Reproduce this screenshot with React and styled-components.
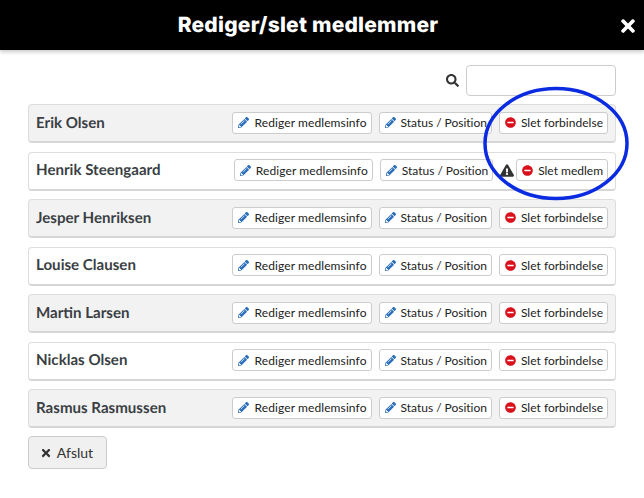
import React from "react";
import styled, { createGlobalStyle } from "styled-components";
import {
  FaPencilAlt,
  FaTimes,
  FaSearch,
  FaMinusCircle,
  FaExclamationTriangle
} from "react-icons/fa";

const GlobalStyle = createGlobalStyle`
  html, body {
    margin: 0;
    background: #fff;
    font-family: Lato, "Liberation Sans", sans-serif;
    text-rendering: geometricPrecision;
  }
`;

const Page = styled.div`
  position: relative;
  width: 644px;
  height: 498px;
  overflow: hidden;
`;

const Header = styled.header`
  height: 50px;
  padding-right: 28px;
  box-sizing: border-box;
  background: #000;
  box-shadow: 0 2px 4px rgba(0, 0, 0, 0.22);
  display: flex;
  align-items: center;
  justify-content: center;
  color: #fff;
  position: relative;
`;

const Title = styled.h1`
  margin: 0;
  font-family: Inter, "Open Sans", sans-serif;
  font-size: 21px;
  font-weight: 800;
  letter-spacing: 0.22px;
`;

const Close = styled(FaTimes)`
  position: absolute;
  top: 16px;
  right: 6px;
  width: 20px;
  height: 20px;
`;

const Content = styled.div`
  padding: 15px 28px 0;
`;

const SearchBar = styled.div`
  display: flex;
  justify-content: flex-end;
  align-items: center;
  gap: 7px;
  margin-bottom: 8px;
  color: #333;
`;

const SearchInput = styled.input`
  box-sizing: border-box;
  width: 150px;
  height: 31px;
  border: 1px solid #ccc;
  border-radius: 4px;
`;

const List = styled.div`
  display: flex;
  flex-direction: column;
  gap: 8.5px;
`;

const Row = styled.div`
  box-sizing: border-box;
  height: 39px;
  display: flex;
  align-items: center;
  justify-content: space-between;
  padding: 0 7px 1px;
  border: 1px solid #ddd;
  border-bottom: 2px solid #d6d6d6;
  border-radius: 4px;
  background: ${props => (props.$shaded ? "#f2f2f2" : "#fff")};
`;

const Name = styled.span`
  font-size: 15.1px;
  font-weight: 700;
  color: #3a3f44;
`;

const Actions = styled.div`
  display: flex;
  align-items: center;
  gap: 7px;
`;

const Button = styled.button`
  box-sizing: border-box;
  height: 22px;
  padding: 0 4px 0 5px;
  display: flex;
  align-items: center;
  gap: 5px;
  font-family: inherit;
  font-size: 12px;
  letter-spacing: ${props => props.$track || 0}px;
  color: #222;
  background: #fff;
  border: 1px solid #ccc;
  border-radius: 3px;
  white-space: nowrap;
`;

const Pencil = styled(FaPencilAlt)`
  width: 11px;
  height: 11px;
  color: #2a6ebb;
`;

const Minus = styled(FaMinusCircle)`
  width: 11px;
  height: 11px;
  color: #d9111c;
`;

const Warning = styled(FaExclamationTriangle)`
  width: 14px;
  height: 13px;
  margin-right: -5px;
  color: #333;
`;

const CloseButton = styled.button`
  box-sizing: border-box;
  margin-top: 8px;
  width: 79px;
  height: 33px;
  padding: 0 2px 0 0;
  display: flex;
  align-items: center;
  justify-content: center;
  gap: 5px;
  font-family: inherit;
  font-size: 14px;
  color: #333;
  background: #f0f0f0;
  border: 1px solid #ccc;
  border-radius: 4px;
`;

const Ring = styled.svg`
  position: absolute;
  left: 482px;
  top: 86px;
  pointer-events: none;
`;

const members = [
  "Erik Olsen",
  "Henrik Steengaard",
  "Jesper Henriksen",
  "Louise Clausen",
  "Martin Larsen",
  "Nicklas Olsen",
  "Rasmus Rasmussen"
];

export default function App() {
  return (
    <Page>
      <GlobalStyle />
      <Header>
        <Title>Rediger/slet medlemmer</Title>
        <Close />
      </Header>
      <Content>
        <SearchBar>
          <FaSearch size={13} />
          <SearchInput />
        </SearchBar>
        <List>
          {members.map((name, i) => (
            <Row key={name} $shaded={i % 2 === 0}>
              <Name>{name}</Name>
              <Actions>
                <Button $track={0.1}>
                  <Pencil />
                  Rediger medlemsinfo
                </Button>
                <Button $track={-0.02}>
                  <Pencil />
                  Status / Position
                </Button>
                {i === 1 && <Warning />}
                <Button $track={i === 1 ? 0 : 0.02}>
                  <Minus />
                  {i === 1 ? "Slet medlem" : "Slet forbindelse"}
                </Button>
              </Actions>
            </Row>
          ))}
        </List>
        <CloseButton>
          <FaTimes size={12} />
          Afslut
        </CloseButton>
      </Content>
      <Ring width="148" height="115" viewBox="0 0 148 115">
        <ellipse cx="74" cy="57.5" rx="71" ry="55" fill="none" stroke="#0a2be0" strokeWidth="3.5" />
      </Ring>
    </Page>
  );
}
